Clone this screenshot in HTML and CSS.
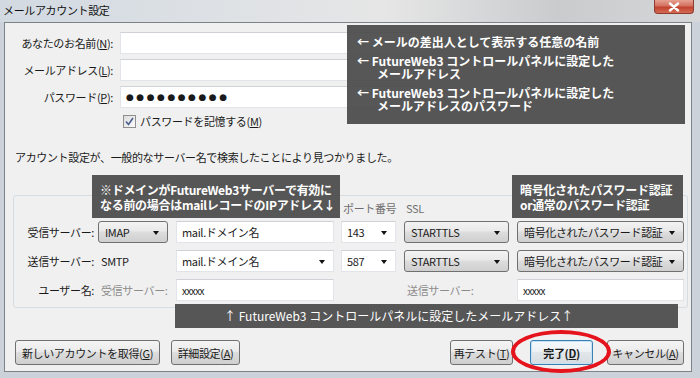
FILE: index.html
```html
<!DOCTYPE html>
<html lang="ja">
<head>
    <meta charset="UTF-8" />
    <title>メールアカウント設定</title>
<link rel="stylesheet" href="styles.css">
</head>
<body>
    <div class="window">
        <div class="titlebar">
            <span class="title">メールアカウント設定</span>
            <span class="close">
                <svg width="14" height="10" viewBox="0 0 14 10"><path d="M3 1.5 L11 8.5 M11 1.5 L3 8.5" stroke="#fff" stroke-width="2.4" stroke-linecap="round"/></svg>
            </span>
        </div>
        <div class="client">
            <div class="identity">
                <label>あなたのお名前(<u>N</u>):</label>
                <div class="field"></div>
                <label>メールアドレス(<u>L</u>):</label>
                <div class="field"></div>
                <label>パスワード(<u>P</u>):</label>
                <div class="field dots">●●●●●●●●●●</div>
            </div>
            <div class="remember">
                <span class="check">
                    <svg width="9" height="9" viewBox="0 0 9 9"><path d="M1 4.5 L3.5 7.5 L8 1" fill="none" stroke="#4c5f8f" stroke-width="1.6"/></svg>
                </span>
                <span>パスワードを記憶する(<u>M</u>)</span>
            </div>
            <p class="found">アカウント設定が、一般的なサーバー名で検索したことにより見つかりました。</p>
            <div class="servers">
                <span></span>
                <span></span>
                <span></span>
                <span class="head">ポート番号</span>
                <span class="head">SSL</span>
                <span></span>

                <span class="lbl">受信サーバー:</span>
                <span class="select w70">IMAP</span>
                <span class="field w158">mail.ドメイン名</span>
                <span class="field combo w55">143</span>
                <span class="select w105">STARTTLS</span>
                <span class="select w167">暗号化されたパスワード認証</span>

                <span class="lbl">送信サーバー:</span>
                <span class="plain">SMTP</span>
                <span class="field combo w158">mail.ドメイン名</span>
                <span class="field combo w55">587</span>
                <span class="select w105">STARTTLS</span>
                <span class="select w167">暗号化されたパスワード認証</span>

                <span class="lbl">ユーザー名:</span>
                <span class="plain grey">受信サーバー:</span>
                <span class="field w158 user">xxxxx</span>
                <span></span>
                <span class="plain grey">送信サーバー:</span>
                <span class="field w167 user">xxxxx</span>
            </div>
            <div class="actions">
                <span class="btn b145">新しいアカウントを取得(<u>G</u>)</span>
                <span class="btn b69">詳細設定(<u>A</u>)</span>
                <span class="btn b63 retest">再テスト(<u>T</u>)</span>
                <span class="btn b63 primary">完了(<u>D</u>)</span>
                <span class="btn b77">キャンセル(<u>A</u>)</span>
            </div>
        </div>

        <div class="note note-id">
            <p>←&nbsp;メールの差出人として表示する任意の名前</p>
            <p>←&nbsp;FutureWeb3 コントロールパネルに設定した<br>メールアドレス</p>
            <p>←&nbsp;FutureWeb3 コントロールパネルに設定した<br>メールアドレスのパスワード</p>
        </div>
        <div class="note note-host">※ドメインがFutureWeb3サーバーで有効に<br>なる前の場合はmailレコードのIPアドレス↓</div>
        <div class="note note-auth">暗号化されたパスワード認証<br>or通常のパスワード認証</div>
        <div class="note note-user">↑ FutureWeb3 コントロールパネルに設定したメールアドレス↑</div>
        <div class="ring"></div>
    </div>
</body>
</html>
```
FILE: styles.css
```css
* {margin: 0; padding: 0; box-sizing: border-box;}
body {
    width: 700px;
    height: 378px;
    overflow: hidden;
    font-family: "Noto Sans CJK JP", "Noto Sans", sans-serif;
    font-size: 11px;
    letter-spacing: -0.35px;
    color: #1a1a1a;
}
u {text-decoration: underline; text-underline-offset: 1px;}

.window {
    position: relative;
    height: 378px;
    display: flex;
    flex-direction: column;
    background: #ccd2d9;
    padding: 0 8px 6px 4px;
}
.titlebar {
    height: 22px;
    margin: 0 -8px 0 -4px;
    padding: 0 4px 0 3px;
    display: flex;
    align-items: flex-start;
    justify-content: space-between;
    background: linear-gradient(to right, #d2d9e1, #dde1e5 30%, #e6e6e6 55%, #c9cbcd 80%, #d6d7d8);
}
.title {line-height: 20px; color: #111;}
.close {
    width: 40px;
    height: 14px;
    margin-right: 2px;
    display: flex;
    align-items: center;
    justify-content: center;
    border: 1px solid #8e3b32;
    border-top: none;
    border-radius: 0 0 4px 4px;
    background: linear-gradient(#e6a192, #d3715f 45%, #c1422f 55%, #d46a53);
}

.client {
    flex: 1;
    background: #f0f0f0;
    border: 1px solid #7d8287;
    padding-top: 9px;
}

.identity {
    display: grid;
    grid-template-columns: 108px 300px;
    column-gap: 7px;
    row-gap: 5px;
    align-items: center;
}
.identity label {text-align: right;}

.field {
    height: 22px;
    background: #fff;
    border: 1px solid #e1e4e8;
    border-top-color: #cfd3d8;
    display: flex;
    align-items: center;
    padding: 0 5px;
    position: relative;
}
.dots {
    font-family: "DejaVu Sans", sans-serif;
    font-size: 9px;
    letter-spacing: 2.5px;
}

.remember {
    display: flex;
    align-items: center;
    height: 18px;
    margin: 4px 0 0 118px;
    gap: 4px;
}
.check {
    width: 13px;
    height: 13px;
    border: 1px solid #8f8f8f;
    background: linear-gradient(135deg, #dcdcdc, #fbfbfb);
    display: flex;
    align-items: center;
    justify-content: center;
}

.found {margin: 19px 0 0 10px; line-height: 16px;}

.servers {
    margin: 30px 0 0 8px;
    width: 675px;
    border: 1px solid #d5dde3;
    border-radius: 3px;
    padding: 2px 0 6px 9px;
    display: grid;
    grid-template-columns: 75px 78px 165px 63px 113px 167px;
    grid-template-rows: 16px 22px 22px 22px;
    row-gap: 7px;
    align-items: center;
}
.servers .head {color: #6f6f6f; padding-left: 2px; margin-top: 3px;}
.servers .lbl {text-align: right; padding-right: 4px;}
.servers .plain {padding-left: 3px;}
.servers .grey {color: #8c8c8c;}
.servers .user {font-size: 10px; letter-spacing: -0.6px;}

.w55 {width: 55px;}
.w70 {width: 70px;}
.w105 {width: 105px;}
.w158 {width: 158px;}
.w167 {width: 167px;}

.select {
    height: 22px;
    border: 1px solid #707070;
    border-radius: 3px;
    background: linear-gradient(#f3f3f3, #e9e9e9 45%, #dddddd 50%, #cfcfcf);
    display: flex;
    align-items: center;
    padding: 0 6px;
    position: relative;
}
.select::after, .combo::after {
    content: "";
    position: absolute;
    right: 8px;
    top: 9px;
    border-left: 3.5px solid transparent;
    border-right: 3.5px solid transparent;
    border-top: 4px solid #111;
}

.actions {
    display: flex;
    margin: 32px 0 0 10px;
    width: 669px;
}
.btn {
    height: 25px;
    border: 1px solid #707070;
    border-radius: 3px;
    background: linear-gradient(#f4f4f4, #ebebeb 45%, #dddddd 50%, #cfcfcf);
    display: flex;
    align-items: center;
    justify-content: center;
    white-space: nowrap;
}
.b145 {width: 145px; margin-right: 11px;}
.b69 {width: 69px;}
.b63 {width: 63px;}
.b77 {width: 77px;}
.retest {margin-left: auto; margin-right: 17px;}
.primary {
    margin-right: 14px;
    font-weight: bold;
    border-color: #3c7fb1;
    box-shadow: inset 0 0 0 1px #c4e3f6;
    background: linear-gradient(#f6f9fb, #eef2f5 45%, #e1e6ea 50%, #d6dce1);
}

.note {
    position: absolute;
    background: rgba(74, 74, 74, 0.93);
    color: #fff;
    font-size: 12px;
    letter-spacing: 0;
    white-space: nowrap;
}
.note-id {
    left: 347px;
    top: 25px;
    width: 338px;
    height: 99px;
    padding: 10px 0 0 10px;
    line-height: 13px;
    font-weight: bold;
}
.note-id p {margin-bottom: 6px; padding-left: 20px; text-indent: -20px;}
.note-host, .note-auth {
    top: 175px;
    height: 43px;
    padding: 7px 0 0 8px;
    line-height: 15px;
    font-weight: bold;
    letter-spacing: -0.3px;
}
.note-host {left: 92px; width: 248px;}
.note-auth {left: 512px; width: 171px;}
.note-user {
    left: 175px;
    top: 304px;
    width: 503px;
    height: 24px;
    line-height: 24px;
    padding-left: 49px;
}

.ring {
    position: absolute;
    left: 511px;
    top: 330px;
    width: 100px;
    height: 43px;
    border: 4px solid #e5131b;
    border-radius: 50%;
}
```
